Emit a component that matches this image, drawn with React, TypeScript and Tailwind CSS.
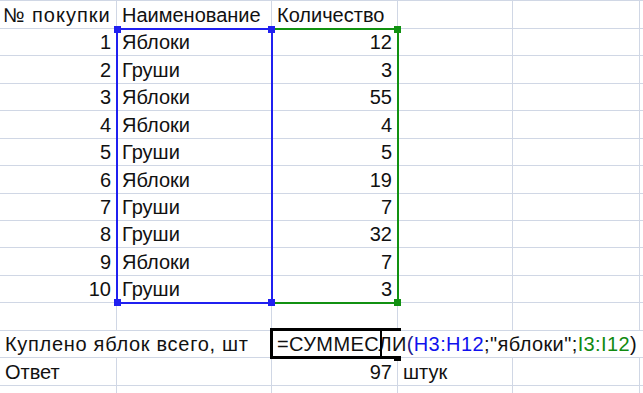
const rows: string[][] = [
  ["№ покупки", "Наименование", "Количество"],
  ["1", "Яблоки", "12"],
  ["2", "Груши", "3"],
  ["3", "Яблоки", "55"],
  ["4", "Яблоки", "4"],
  ["5", "Груши", "5"],
  ["6", "Яблоки", "19"],
  ["7", "Груши", "7"],
  ["8", "Груши", "32"],
  ["9", "Яблоки", "7"],
  ["10", "Груши", "3"],
];

const cell = "flex items-end border-r border-b border-[#d0d7e5] px-[5px] pb-[2px] whitespace-nowrap overflow-visible";

const Blank = () => <div className={cell} />;

export default function App() {
  return (
    <div className="w-[643px] h-[393px] overflow-hidden bg-white">
      <div
        className="relative grid grid-cols-[117px_155px_126px_115px_127px_120px] grid-rows-[28px_27px_28px_27px_28px_27px_28px_27px_27px_28px_27px_28px_27px_28px_28px] border-t border-[#d0d7e5] text-[20px] leading-[22px] text-[#111]"
        style={{ fontFamily: '"Liberation Sans", Arial, sans-serif' }}
      >
        {rows.map((r, i) => (
          <>
            <div key={`a${i}`} className={`${cell} ${i === 0 ? "justify-start pl-[3px] tracking-[1px]" : "justify-end"}`}>{r[0]}</div>
            <div key={`b${i}`} className={`${cell} justify-start`}>{r[1]}</div>
            <div key={`c${i}`} className={`${cell} ${i === 0 ? "justify-start" : "justify-end"}`}>{r[2]}</div>
            <Blank key={`d${i}`} />
            <Blank key={`e${i}`} />
            <Blank key={`f${i}`} />
          </>
        ))}

        {/* empty row */}
        <Blank /><Blank /><Blank /><Blank /><Blank /><Blank />

        {/* formula row */}
        <div className={`${cell} col-span-2 justify-start tracking-[0.7px]`}>Куплено яблок всего, шт</div>
        <div className={`${cell} col-span-4 justify-start tracking-[0.4px]`}>
          <span>=СУММЕСЛИ</span>
          <span className="text-[#22228a]">(</span>
          <span className="text-[#1010ee]">H3:H12</span>
          <span>;"яблоки";</span>
          <span className="text-[#108a10]">I3:I12</span>
          <span>)</span>
        </div>

        {/* answer row */}
        <div className={`${cell} justify-start`}>Ответ</div>
        <Blank />
        <div className={`${cell} justify-end`}>97</div>
        <div className={`${cell} justify-start`}>штук</div>
        <Blank /><Blank />

        <Blank /><Blank /><Blank /><Blank /><Blank /><Blank />

        {/* range finder: I3:I12 */}
        <div className="absolute left-[271px] top-[27px] w-[128px] h-[276px] border-2 border-[#119111]" />
        <div className="absolute left-[394px] top-[25px] w-[7px] h-[7px] bg-[#119111]" />
        <div className="absolute left-[394px] top-[298px] w-[7px] h-[7px] bg-[#119111]" />

        {/* range finder: H3:H12 */}
        <div className="absolute left-[116px] top-[27px] w-[157px] h-[276px] border-2 border-[#2020f0]" />
        <div className="absolute left-[114px] top-[25px] w-[7px] h-[7px] bg-[#2020f0]" />
        <div className="absolute left-[268px] top-[25px] w-[7px] h-[7px] bg-[#2020f0]" />
        <div className="absolute left-[114px] top-[298px] w-[7px] h-[7px] bg-[#2020f0]" />
        <div className="absolute left-[268px] top-[298px] w-[7px] h-[7px] bg-[#2020f0]" />

        {/* active cell in edit mode */}
        <div className="absolute left-[270px] top-[327px] w-[131px] h-[31px] border-l-[3px] border-t-[3px] border-b-[3px] border-black" />
        <div className="absolute left-[380px] top-[327px] w-[2px] h-[31px] bg-black" />
        <div className="absolute left-[394px] top-[355px] w-[7px] h-[5px] bg-black" />
      </div>
    </div>
  );
}
